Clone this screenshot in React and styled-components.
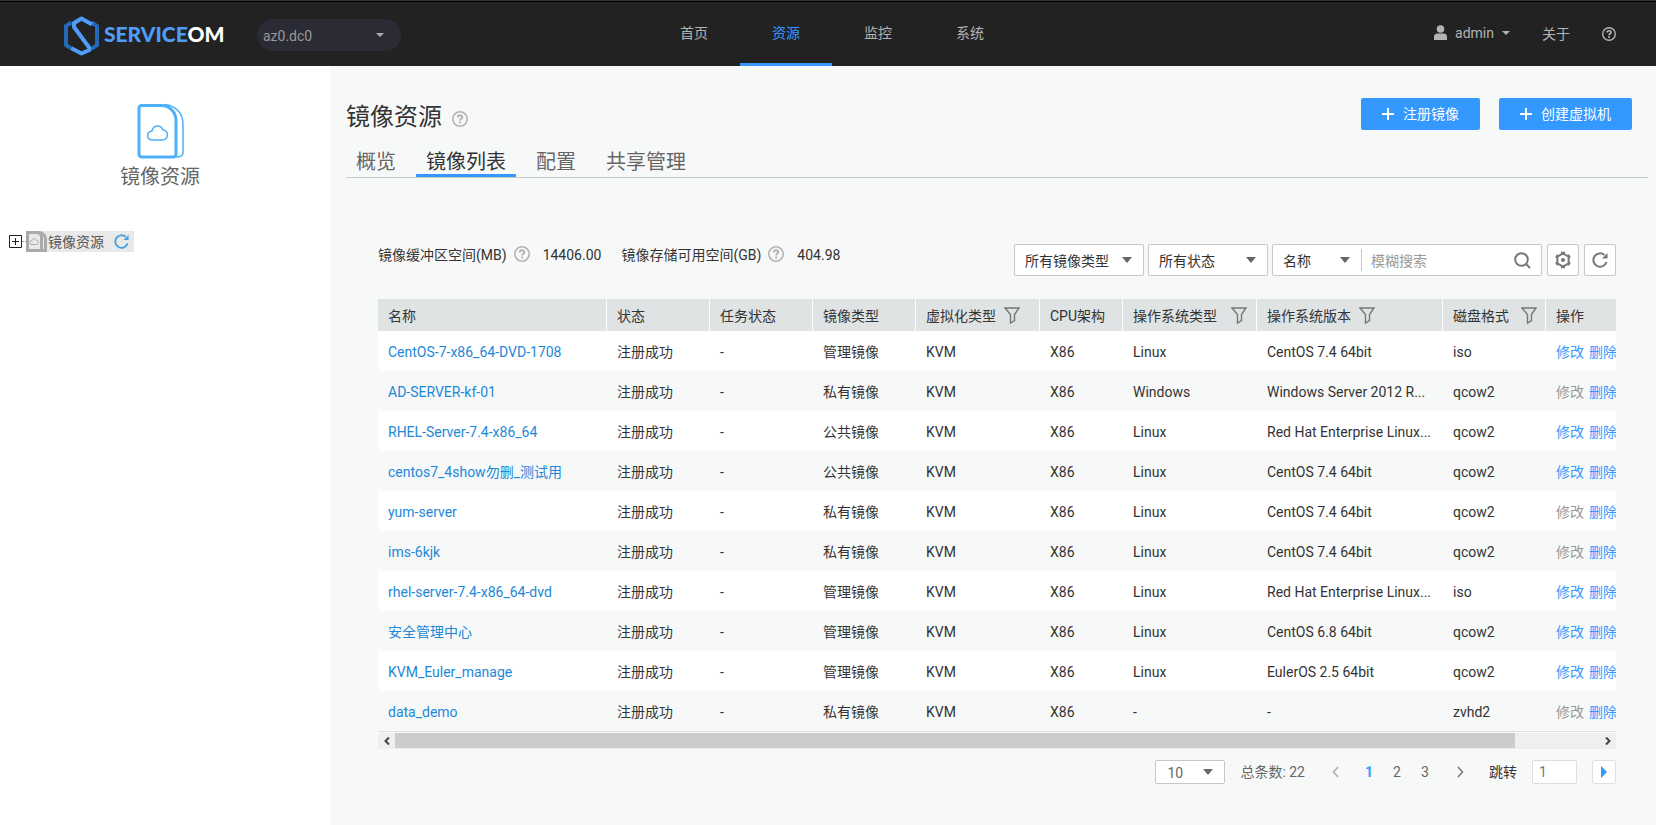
import React, { useRef, useState } from "react";
import styled, { createGlobalStyle } from "styled-components";

const GlobalStyle = createGlobalStyle`
  * {
    box-sizing: border-box;
  }

  body {
    margin: 0;
    color: #333;
    background-color: #f7f9f9;
    font-family: Roboto, "Noto Sans CJK SC", sans-serif;
    font-size: 14px;
    line-height: 20px;
  }

  button,
  input,
  select {
    font: inherit;
    color: inherit;
  }

  button {
    padding: 0;
    border: 0;
    background: none;
    cursor: pointer;
  }

  a {
    color: inherit;
    text-decoration: none;
  }

  svg {
    display: block;
    flex: none;
  }
`;

const Page = styled.div`
  display: flex;
  flex-direction: column;
  min-height: 100vh;
`;

const Header = styled.header`
  display: grid;
  grid-template-columns: 1fr auto 1fr;
  height: 66px;
  border-top: 1px solid #333;
  background-color: #222;
  box-shadow: inset 0 1px 0 #000;
  color: #b3b3b3;
`;

const HeaderLeft = styled.div`
  display: flex;
  align-items: center;
  padding: 4px 0 0 63px;
`;

const Logo = styled.a`
  display: flex;
  align-items: center;
  gap: 4px;
  width: 194px;
`;

const LogoText = styled.span`
  color: ${(props) => (props.$light ? "#fff" : "#4f9df8")};
  font-family: Lato, sans-serif;
  font-size: 21px;
  font-weight: 900;
`;

const SelectBox = styled.div`
  display: grid;
  align-items: center;
  width: ${(props) => props.$width}px;
  height: ${(props) => props.$height || 32}px;
  border: ${(props) => (props.$plain ? "0" : "1px solid #c5c8c9")};
  border-radius: 2px;
  background-color: #fff;

  select {
    grid-area: 1 / 1;
    width: 100%;
    height: 100%;
    padding: 2px 24px 0 ${(props) => props.$indent || 10}px;
    border: 0;
    outline: 0;
    background: none;
    appearance: none;
  }

  &::after {
    content: "";
    grid-area: 1 / 1;
    justify-self: end;
    margin-right: 11px;
    border: 5px solid transparent;
    border-top: 6px solid #666;
    border-bottom: 0;
    pointer-events: none;
  }
`;

const ZoneSelect = styled(SelectBox)`
  margin-bottom: 2px;
  border: 0;
  border-radius: 16px;
  background-color: #2a2b35;
  color: #999;

  select {
    padding-left: 6px;
  }

  &::after {
    margin-right: 17px;
    border-width: 4px 4px 0;
    border-top-color: #aaa;
  }
`;

const Nav = styled.nav`
  display: flex;
  padding-left: 8px;
`;

const NavLink = styled.a`
  width: 92px;
  padding-top: 22px;
  border-bottom: 3px solid ${(props) => (props.$active ? "#39f" : "transparent")};
  color: ${(props) => (props.$active ? "#39f" : "#b3b3b3")};
  text-align: center;
`;

const HeaderRight = styled.div`
  display: flex;
  align-items: center;
  justify-content: flex-end;
  gap: 32px;
  padding-right: 40px;
`;

const UserButton = styled.button`
  display: flex;
  align-items: center;
  gap: 8px;
  padding-bottom: 2px;

  &::after {
    content: "";
    border: 4px solid transparent;
    border-top-color: #b3b3b3;
    border-bottom: 0;
  }
`;

const Body = styled.div`
  display: flex;
  flex: 1;
`;

const Sidebar = styled.aside`
  flex: none;
  width: 330px;
  padding: 37px 0 0 8px;
  background-color: #fff;
`;

const SidebarTitle = styled.div`
  display: flex;
  flex-direction: column;
  align-items: center;
  gap: 4px;
  margin-bottom: 40px;
  padding-right: 18px;
  color: #666;
  font-size: 20px;
  line-height: 28px;
`;

const TreeRow = styled.div`
  display: flex;
  align-items: center;

  &::before {
    content: "";
    order: 1;
    width: 4px;
    border-top: 1px dotted #999;
  }
`;

const Expander = styled.button`
  display: grid;
  place-items: center;
  width: 14px;
  height: 14px;
`;

const TreeNode = styled.div`
  order: 2;
  display: flex;
  align-items: center;
  width: 108px;
  height: 21px;
  background-color: #e9e9e9;
  color: #555;

  span {
    flex: 1;
    padding-left: 1px;
  }

  button {
    margin-right: 5px;
  }
`;

const Main = styled.main`
  flex: 1;
  min-width: 0;
  padding: 32px 8px 24px 16px;
`;

const TitleRow = styled.div`
  display: flex;
  justify-content: space-between;
  height: 48px;
  padding-right: 16px;
`;

const Title = styled.h1`
  display: flex;
  align-items: center;
  gap: 10px;
  height: 38px;
  margin: 0;
  font-size: 24px;
  font-weight: 400;

  svg {
    margin-top: 4px;
  }
`;

const Actions = styled.div`
  display: flex;
  gap: 19px;
`;

const PrimaryButton = styled.button`
  display: flex;
  align-items: center;
  gap: 9px;
  height: 32px;
  padding: 0 21px;
  border-radius: 2px;
  background-color: #39f;
  color: #fff;
`;

const Tabs = styled.nav`
  display: flex;
  gap: 10px;
  height: 32px;
  border-bottom: 1px solid #c8cbcb;
`;

const Tab = styled.a`
  padding: 4px 10px 0;
  border-bottom: 3px solid ${(props) => (props.$active ? "#39f" : "transparent")};
  color: ${(props) => (props.$active ? "#333" : "#666")};
  font-size: 20px;
  line-height: 24px;
`;

const Content = styled.section`
  padding: 66px 32px 0;
`;

const Toolbar = styled.div`
  display: flex;
  justify-content: space-between;
  height: 55px;
`;

const Stats = styled.dl`
  display: flex;
  height: 22px;
  margin: 0;
  line-height: 22px;

  dt {
    display: flex;
    align-items: center;
    gap: 7px;
  }

  svg {
    margin-bottom: 2px;
  }

  dd {
    margin: 0 20px 0 13px;
  }
`;

const Filters = styled.div`
  display: flex;
  gap: 4px;
`;

const SearchBox = styled.div`
  display: flex;
  align-items: center;
  width: 270px;
  height: 32px;
  border: 1px solid #c5c8c9;
  border-radius: 2px;
  background-color: #fff;

  input {
    flex: 1;
    min-width: 0;
    height: 22px;
    padding: 2px 0 0 9px;
    border: 0;
    border-left: 1px solid #c5c8c9;
    outline: 0;
  }

  input::placeholder {
    color: #999;
  }

  button {
    margin-right: 10px;
  }
`;

const SquareButton = styled.button`
  display: grid;
  place-items: center;
  width: ${(props) => props.$size || 32}px;
  height: ${(props) => props.$size || 32}px;
  border: 1px solid ${(props) => (props.$size ? "#dcdfe0" : "#c5c8c9")};
  border-radius: 2px;
  background-color: #fff;
`;

const ToolButton = styled(SquareButton)`
  margin-left: 1px;
`;

const TableWrap = styled.div`
  overflow: hidden;
  border-bottom: 1px solid #dde0e0;
`;

const Table = styled.table`
  width: 108%;
  table-layout: fixed;
  border-collapse: separate;
  border-spacing: 0;

  th {
    height: 32px;
    padding: 2px 0 0 10px;
    border-right: 1px solid #fff;
    background-color: #dfe3e4;
    font-weight: 400;
    text-align: left;
    white-space: nowrap;
  }

  td {
    height: 40px;
    padding: 2px 8px 0 10px;
    overflow: hidden;
    white-space: nowrap;
  }

  tbody tr:nth-child(odd) {
    background-color: #fff;
  }
`;

const HeadCell = styled.div`
  display: flex;
  align-items: center;
  gap: ${(props) => props.$gap || 8}px;

  button {
    padding-bottom: 2px;
  }
`;

const NameLink = styled.a`
  color: #1d87d8;
`;

const RowAction = styled.button`
  margin-right: 5px;
  color: #39f;

  &:disabled {
    color: #999;
    cursor: default;
  }
`;

const ScrollBar = styled.div`
  display: flex;
  height: 16px;
  margin-top: 1px;
  background-color: #efefef;

  button {
    display: grid;
    place-items: center;
    width: 17px;
    height: 16px;
  }
`;

const ScrollTrack = styled.div`
  flex: 1;
  height: 15px;
`;

const ScrollThumb = styled.div`
  width: 93%;
  height: 15px;
  background-color: #ccc;
`;

const Pagination = styled.div`
  display: flex;
  align-items: center;
  justify-content: flex-end;
  height: 24px;
  margin-top: 11px;
  color: #666;
`;

const Total = styled.span`
  margin: 0 26px 0 15px;
`;

const PageArrow = styled.button`
  display: grid;
  place-items: center;
  width: 8px;
  height: 20px;

  &:disabled {
    opacity: 0.6;
  }
`;

const PageList = styled.div`
  display: flex;
  margin: 0 17px 0 16px;
`;

const PageNumber = styled.button`
  width: 28px;
  color: ${(props) => (props.$active ? "#39f" : "#666")};
  font-weight: ${(props) => (props.$active ? 700 : 400)};
`;

const JumpLabel = styled.label`
  display: flex;
  align-items: center;
  gap: 15px;
  margin: 0 15px 0 25px;
  color: #333;

  input {
    width: 45px;
    height: 24px;
    padding: 0 0 0 6px;
    border: 1px solid #dcdfe0;
    border-radius: 2px;
    outline: 0;
    background-color: #fff;
    color: #777;
  }
`;

const columns = [
  { title: "名称", width: 229 },
  { title: "状态", width: 103 },
  { title: "任务状态", width: 103 },
  { title: "镜像类型", width: 103 },
  { title: "虚拟化类型", width: 124, filter: true },
  { title: "CPU架构", width: 83 },
  { title: "操作系统类型", width: 134, filter: true, gap: 14 },
  { title: "操作系统版本", width: 186, filter: true },
  { title: "磁盘格式", width: 103, filter: true, gap: 12 },
  { title: "操作" },
];

const images = [
  { name: "CentOS-7-x86_64-DVD-1708", type: "管理镜像", os: "Linux", version: "CentOS 7.4 64bit", format: "iso", editable: true },
  { name: "AD-SERVER-kf-01", type: "私有镜像", os: "Windows", version: "Windows Server 2012 R...", format: "qcow2" },
  { name: "RHEL-Server-7.4-x86_64", type: "公共镜像", os: "Linux", version: "Red Hat Enterprise Linux...", format: "qcow2", editable: true },
  { name: "centos7_4show勿删_测试用", type: "公共镜像", os: "Linux", version: "CentOS 7.4 64bit", format: "qcow2", editable: true },
  { name: "yum-server", type: "私有镜像", os: "Linux", version: "CentOS 7.4 64bit", format: "qcow2" },
  { name: "ims-6kjk", type: "私有镜像", os: "Linux", version: "CentOS 7.4 64bit", format: "qcow2" },
  { name: "rhel-server-7.4-x86_64-dvd", type: "管理镜像", os: "Linux", version: "Red Hat Enterprise Linux...", format: "iso", editable: true },
  { name: "安全管理中心", type: "管理镜像", os: "Linux", version: "CentOS 6.8 64bit", format: "qcow2", editable: true },
  { name: "KVM_Euler_manage", type: "管理镜像", os: "Linux", version: "EulerOS 2.5 64bit", format: "qcow2", editable: true },
  { name: "data_demo", type: "私有镜像", os: "-", version: "-", format: "zvhd2" },
];

const HelpIcon = ({ size = 16, color = "#b3b3b3" }) => (
  <svg width={size} height={size} viewBox="0 0 16 16" fill="none" stroke={color}>
    <circle cx="8" cy="8" r="7.2" strokeWidth="1.6" />
    <path d="M5.8 6.4C5.8 5 6.8 4.3 8 4.3s2.2.7 2.2 1.9c0 1.5-2.1 1.6-2.1 3.2" strokeWidth="1.9" />
    <path d="M7.100 11.500h2" strokeWidth="1.900" />
  </svg>
);

const LogoIcon = () => (
  <svg width="37" height="42" viewBox="0 0 37 42" fill="none" strokeWidth="4">
    <path d="M8.500 7.500L3 11v19l4.500 3M28.500 7.500L34 11v19l-5.500 4" stroke="#2469b8" />
    <path
      d="M29 9.500L18.500 3.500 11 8v4l15.500 21v2l-8 3.500L8 33"
      stroke="#4f9df8"
      strokeLinejoin="round"
    />
  </svg>
);

const ImageIcon = () => (
  <svg width="48" height="56" viewBox="0 0 48 56" fill="none" stroke="#4eb0f7">
    <path d="M6 2.500h19c9 0 15 7 15 15V51a3 3 0 0 1-3 3H6a3 3 0 0 1-3-3V5a2.500 2.500 0 0 1 3-2.500z" strokeWidth="3" />
    <path d="M28 1.500C39 2 47 10 47 21v29c0 3-2 4-7 4" strokeWidth="1.500" />
    <path d="M17 37c-7 0-7-8-1-9 1-6 9-7 11-1 6 0 6 10-1 10z" strokeWidth="1.500" />
  </svg>
);

const SmallImageIcon = () => (
  <svg width="21" height="21" viewBox="0 0 21 21" fill="none" stroke="#aaa">
    <path d="M1.500 1.500h9c3 0 5 2 5 5v13h-14z" strokeWidth="3" />
    <path d="M12 1.500c5 0 7.500 3 7.500 7v11H15" strokeWidth="3" />
    <path d="M6 13.500c-3 0-3-3.500 0-4C7 7 10 7 10.500 9.500c2.500 0 2.500 4 0 4z" />
  </svg>
);

const RefreshIcon = ({ size = 16, color = "#777" }) => (
  <svg width={size} height={size} viewBox="0 0 16 16" fill="none" stroke={color} strokeWidth="2">
    <path d="M14.500 10A6.700 6.700 0 1 1 12.500 3" />
    <path d="M15.500 1v5.500H10z" fill={color} stroke="none" />
  </svg>
);

const FilterIcon = () => (
  <svg width="16" height="17" viewBox="0 0 16 17" fill="none" stroke="#777" strokeWidth="1.400">
    <path d="M1 1h14l-4.500 6.500v6L6.500 16V7.500z" />
  </svg>
);

const Chevron = ({ left, width = 7, height = 12, stroke = 1.5 }) => (
  <svg width={width} height={height} viewBox="0 0 7 12" fill="none" stroke="#777" strokeWidth={stroke}>
    <path d={left ? "M6 1L1.500 6 6 11" : "M1 1l4.500 5L1 11"} />
  </svg>
);

const ScrollArrow = ({ left }) => (
  <svg width="6" height="8" viewBox="0 0 6 8" fill="none" stroke="#444" strokeWidth="2">
    <path d={left ? "M5 .500L1.500 4 5 7.500" : "M1 .500L4.500 4 1 7.500"} />
  </svg>
);

const PlusIcon = () => (
  <svg width="12" height="12" viewBox="0 0 12 12" stroke="#fff" strokeWidth="2">
    <path d="M6 0v12M0 6h12" />
  </svg>
);

function TopBar() {
  const [active, setActive] = useState("资源");

  return (
    <Header>
      <HeaderLeft>
        <Logo href="#home" aria-label="ServiceOM">
          <LogoIcon />
          <span>
            <LogoText>SERVICE</LogoText>
            <LogoText $light>OM</LogoText>
          </span>
        </Logo>
        <ZoneSelect $width={144}>
          <select aria-label="可用区">
            <option>az0.dc0</option>
          </select>
        </ZoneSelect>
      </HeaderLeft>
      <Nav>
        {["首页", "资源", "监控", "系统"].map((item) => (
          <NavLink
            key={item}
            href="#nav"
            $active={item === active}
            onClick={() => setActive(item)}
          >
            {item}
          </NavLink>
        ))}
      </Nav>
      <HeaderRight>
        <UserButton>
          <svg width="13" height="15" viewBox="0 0 13 15" fill="#b3b3b3">
            <circle cx="6.500" cy="4" r="3.800" />
            <path d="M0 15v-3c0-3 2-3.500 4-3.500h5c2 0 4 .500 4 3.500v3z" />
          </svg>
          admin
        </UserButton>
        <a href="#about">关于</a>
        <button aria-label="帮助">
          <HelpIcon size={14} />
        </button>
      </HeaderRight>
    </Header>
  );
}

function ResourceTree() {
  return (
    <Sidebar>
      <SidebarTitle>
        <ImageIcon />
        镜像资源
      </SidebarTitle>
      <TreeRow>
        <Expander aria-label="展开">
          <svg width="13" height="13" viewBox="0 0 13 13" fill="none" stroke="#222">
            <path d="M.500 .500h12v12H.500zM3 6.500h7M6.500 3v7" />
          </svg>
        </Expander>
        <TreeNode>
          <SmallImageIcon />
          <span>镜像资源</span>
          <button aria-label="刷新">
            <RefreshIcon size={15} color="#4a9fe0" />
          </button>
        </TreeNode>
      </TreeRow>
    </Sidebar>
  );
}

function ImageTable() {
  const wrapRef = useRef(null);

  const scroll = (offset) => {
    wrapRef.current.scrollLeft += offset;
  };

  return (
    <>
      <TableWrap ref={wrapRef}>
        <Table>
          <colgroup>
            {columns.map((col) => (
              <col key={col.title} width={col.width} />
            ))}
          </colgroup>
          <thead>
            <tr>
              {columns.map((col) => (
                <th key={col.title}>
                  <HeadCell $gap={col.gap}>
                    {col.title}
                    {col.filter && (
                      <button aria-label={`筛选${col.title}`}>
                        <FilterIcon />
                      </button>
                    )}
                  </HeadCell>
                </th>
              ))}
            </tr>
          </thead>
          <tbody>
            {images.map((image) => (
              <tr key={image.name}>
                <td>
                  <NameLink href="#detail">{image.name}</NameLink>
                </td>
                <td>注册成功</td>
                <td>-</td>
                <td>{image.type}</td>
                <td>KVM</td>
                <td>X86</td>
                <td>{image.os}</td>
                <td>{image.version}</td>
                <td>{image.format}</td>
                <td>
                  <RowAction disabled={!image.editable}>修改</RowAction>
                  <RowAction>删除</RowAction>
                </td>
              </tr>
            ))}
          </tbody>
        </Table>
      </TableWrap>
      <ScrollBar>
        <button aria-label="向左滚动" onClick={() => scroll(-40)}>
          <ScrollArrow left />
        </button>
        <ScrollTrack>
          <ScrollThumb />
        </ScrollTrack>
        <button aria-label="向右滚动" onClick={() => scroll(40)}>
          <ScrollArrow />
        </button>
      </ScrollBar>
    </>
  );
}

function Pager() {
  const [page, setPage] = useState(1);
  const [target, setTarget] = useState("1");

  return (
    <Pagination>
      <SelectBox $width={70} $height={24} $indent={11}>
        <select aria-label="每页条数">
          <option>10</option>
          <option>20</option>
          <option>50</option>
        </select>
      </SelectBox>
      <Total>总条数: 22</Total>
      <PageArrow aria-label="上一页" disabled={page === 1} onClick={() => setPage(page - 1)}>
        <Chevron left />
      </PageArrow>
      <PageList>
        {[1, 2, 3].map((n) => (
          <PageNumber key={n} $active={n === page} onClick={() => setPage(n)}>
            {n}
          </PageNumber>
        ))}
      </PageList>
      <PageArrow aria-label="下一页" disabled={page === 3} onClick={() => setPage(page + 1)}>
        <Chevron />
      </PageArrow>
      <JumpLabel>
        跳转
        <input value={target} onChange={(e) => setTarget(e.target.value)} />
      </JumpLabel>
      <SquareButton $size={24} aria-label="跳转" onClick={() => setPage(Number(target))}>
        <svg width="6" height="12" viewBox="0 0 6 12" fill="#39f">
          <path d="M0 0l6 6-6 6z" />
        </svg>
      </SquareButton>
    </Pagination>
  );
}

function App() {
  return (
    <Page>
      <GlobalStyle />
      <TopBar />
      <Body>
        <ResourceTree />
        <Main>
          <TitleRow>
            <Title>
              镜像资源
              <HelpIcon />
            </Title>
            <Actions>
              <PrimaryButton>
                <PlusIcon />
                注册镜像
              </PrimaryButton>
              <PrimaryButton>
                <PlusIcon />
                创建虚拟机
              </PrimaryButton>
            </Actions>
          </TitleRow>
          <Tabs>
            <Tab href="#overview">概览</Tab>
            <Tab href="#list" $active>
              镜像列表
            </Tab>
            <Tab href="#config">配置</Tab>
            <Tab href="#share">共享管理</Tab>
          </Tabs>
          <Content>
            <Toolbar>
              <Stats>
                <dt>
                  镜像缓冲区空间(MB)
                  <HelpIcon />
                </dt>
                <dd>14406.00</dd>
                <dt>
                  镜像存储可用空间(GB)
                  <HelpIcon />
                </dt>
                <dd>404.98</dd>
              </Stats>
              <Filters>
                <SelectBox $width={130}>
                  <select aria-label="镜像类型">
                    <option>所有镜像类型</option>
                  </select>
                </SelectBox>
                <SelectBox $width={120}>
                  <select aria-label="状态">
                    <option>所有状态</option>
                  </select>
                </SelectBox>
                <SearchBox>
                  <SelectBox $width={88} $height={30} $plain>
                    <select aria-label="搜索字段">
                      <option>名称</option>
                    </select>
                  </SelectBox>
                  <input placeholder="模糊搜索" aria-label="模糊搜索" />
                  <button aria-label="搜索">
                    <svg width="17" height="17" viewBox="0 0 17 17" fill="none" stroke="#777" strokeWidth="2">
                      <circle cx="7.500" cy="7.500" r="6.300" />
                      <path d="M12 12l4 4" />
                    </svg>
                  </button>
                </SearchBox>
                <ToolButton aria-label="设置">
                  <svg width="18" height="18" viewBox="0 0 18 18" fill="none" stroke="#777" strokeWidth="2">
                    <path d="M9 2.500l5.600 3.200v6.600L9 15.500l-5.600-3.200V5.700z" />
                    <path d="M7 2h4M7 16h4M2.200 6.800l1.800-3M14 3.800l1.800 3M2.200 11.200l1.800 3M14 14.200l1.800-3" strokeWidth="2.400" />
                    <circle cx="9" cy="9" r="2" fill="#777" stroke="none" />
                  </svg>
                </ToolButton>
                <ToolButton aria-label="刷新">
                  <RefreshIcon />
                </ToolButton>
              </Filters>
            </Toolbar>
            <ImageTable />
            <Pager />
          </Content>
        </Main>
      </Body>
    </Page>
  );
}

export default App;
